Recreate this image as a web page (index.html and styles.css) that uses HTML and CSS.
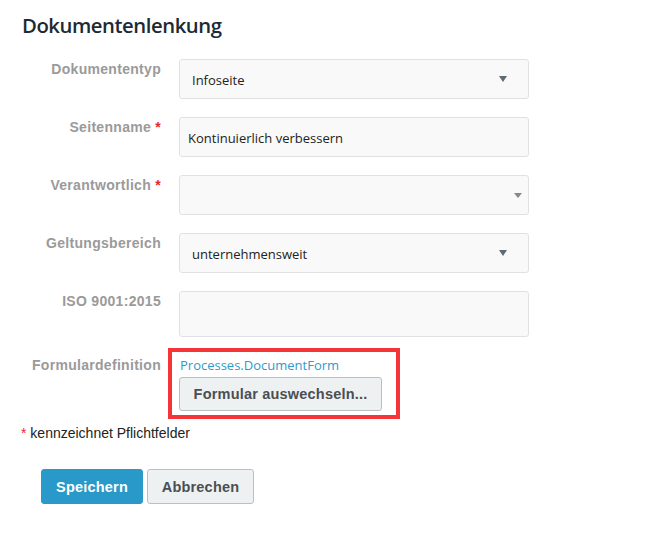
FILE: index.html
```html
<!DOCTYPE html>
<html lang="de">
<head>
<meta charset="utf-8">
<title>Dokumentenlenkung</title>
<link rel="stylesheet" href="styles.css">
</head>
<body>
<div class="page">
  <h1 class="title">Dokumentenlenkung</h1>
  <div class="form">
    <div class="label">Dokumententyp</div>
    <div class="box select"><span class="val">Infoseite</span><span class="caret caret-a"></span></div>

    <div class="label">Seitenname <span class="req">*</span></div>
    <div class="box input"><span class="val">Kontinuierlich verbessern</span></div>

    <div class="label">Verantwortlich <span class="req">*</span></div>
    <div class="box select"><span class="val"></span><span class="caret caret-b"></span></div>

    <div class="label">Geltungsbereich</div>
    <div class="box select"><span class="val">unternehmensweit</span><span class="caret caret-a"></span></div>

    <div class="label">ISO 9001:2015</div>
    <div class="box area"></div>

    <div class="label">Formulardefinition</div>
    <div class="formdef">
      <a class="link" href="#">Processes.DocumentForm</a>
      <button class="btn btn-default btn-swap">Formular auswechseln...</button>
      <div class="highlight"></div>
    </div>
  </div>
  <p class="note"><span class="req">*</span> kennzeichnet Pflichtfelder</p>
  <div class="actions">
    <button class="btn btn-primary">Speichern</button>
    <button class="btn btn-default">Abbrechen</button>
  </div>
</div>
</body>
</html>
```
FILE: styles.css
```css
html, body {
  margin: 0;
  padding: 0;
  background: #ffffff;
}
.page {
  padding-top: 11px;
  font-family: "Liberation Sans", Arial, sans-serif;
}
.title {
  margin: 0 0 0 22px;
  font-family: "Open Sans", "Noto Sans", sans-serif;
  font-weight: 600;
  font-size: 20.3px;
  letter-spacing: -0.45px;
  line-height: 28px;
  color: #1c2a35;
}
.form {
  margin-top: 20px;
  display: grid;
  grid-template-columns: 161px 350px;
  column-gap: 18px;
  row-gap: 18px;
}
.label {
  text-align: right;
  font-family: "Liberation Sans", Arial, sans-serif;
  font-weight: bold;
  font-size: 14px;
  letter-spacing: 0.3px;
  line-height: 16px;
  padding-top: 2px;
  color: #9a9a9a;
  white-space: nowrap;
}
.req {
  color: #e8262b;
}
.box {
  position: relative;
  box-sizing: border-box;
  height: 40px;
  border: 1px solid #dfe2e4;
  border-radius: 3px;
  background: #f9f9f9;
  font-family: "Open Sans", "Noto Sans", sans-serif;
  font-size: 13px;
  line-height: 18px;
  color: #222;
  display: flex;
  align-items: center;
  padding-top: 2px;
}
.select .val { padding-left: 12px; }
.input .val { padding-left: 8px; }
.area { height: 46px; }
.caret {
  position: absolute;
  width: 0;
  height: 0;
  border-left: 4px solid transparent;
  border-right: 4px solid transparent;
}
.caret-a {
  right: 21px;
  top: 16px;
  border-top: 6px solid #5f6b70;
}
.caret-b {
  right: 6px;
  top: 17px;
  border-top: 5px solid #888;
}
.formdef {
  position: relative;
  display: flex;
  flex-direction: column;
  align-items: flex-start;
}
.link {
  font-family: "Open Sans", "Noto Sans", sans-serif;
  font-size: 13px;
  line-height: 20px;
  color: #2b9ccb;
  text-decoration: none;
  padding-left: 1px;
}
.btn {
  box-sizing: border-box;
  font-family: "Liberation Sans", Arial, sans-serif;
  font-weight: bold;
  font-size: 14.5px;
  letter-spacing: 0.2px;
  border-radius: 3px;
  cursor: pointer;
}
.btn-default {
  background: #eef1f2;
  border: 1px solid #b9c0c4;
  color: #4a4f53;
}
.btn-swap {
  margin-top: 2px;
  height: 34px;
  width: 203px;
  padding: 0;
}
.highlight {
  position: absolute;
  left: -11px;
  top: -7px;
  width: 232px;
  height: 71px;
  box-sizing: border-box;
  border: 4px solid #f53538;
}
.note {
  margin: 12px 0 0 21px;
  font-size: 14px;
  line-height: 20px;
  color: #222;
}
.actions {
  margin: 26px 0 0 41px;
  display: flex;
  gap: 4px;
}
.actions .btn {
  height: 35px;
  padding: 0;
}
.btn-primary {
  width: 102px;
  background: #2899c8;
  border: 1px solid #2899c8;
  color: #ffffff;
}
.actions .btn-default {
  width: 107px;
}
```
